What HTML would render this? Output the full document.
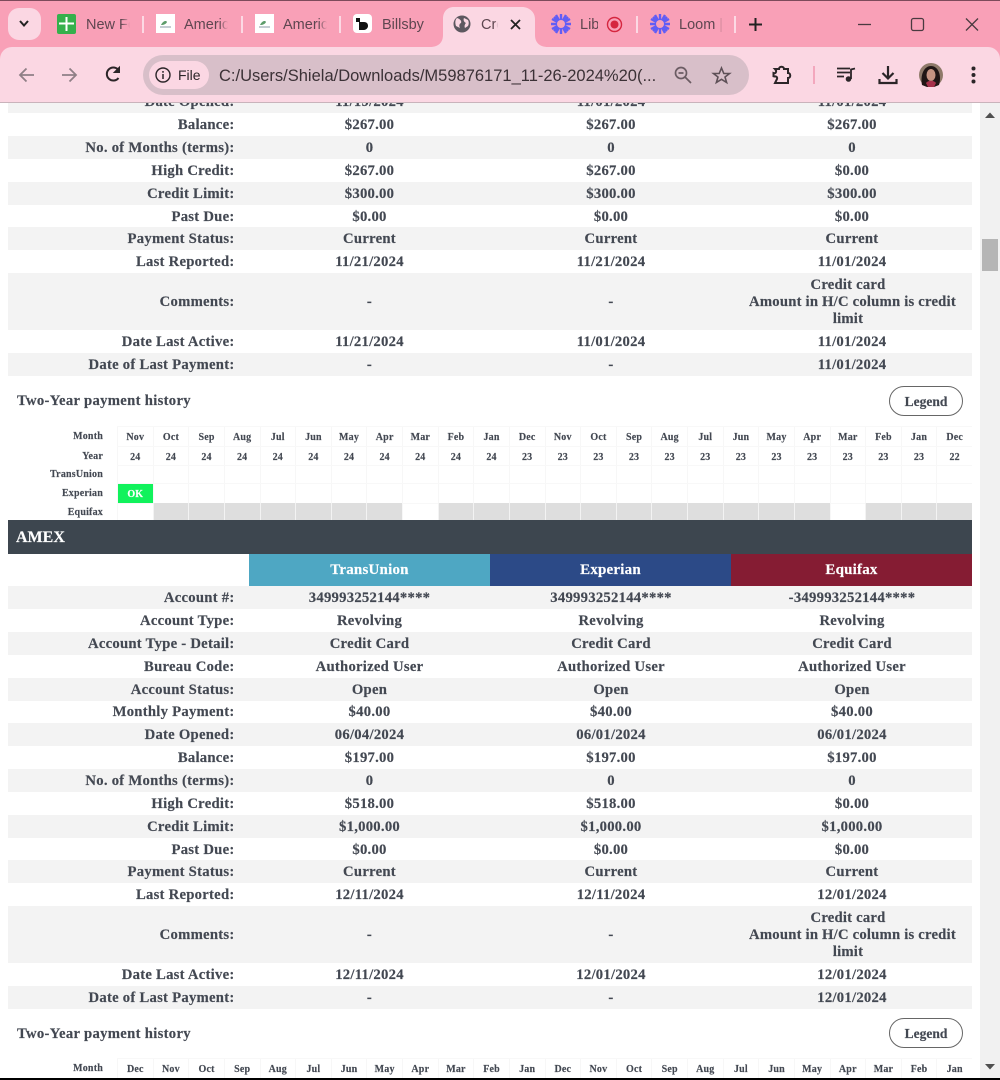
<!DOCTYPE html>
<html><head><meta charset="utf-8"><title>Credit Report</title>
<style>
html,body{margin:0;padding:0;width:1000px;height:1080px;overflow:hidden;background:#fff}
#pg{position:absolute;left:0;top:0;width:1000px;height:1078px;overflow:hidden;font-family:"Liberation Serif",serif;font-weight:bold;color:#434852;font-size:14.7px;filter:blur(.35px);-webkit-text-stroke:.15px}
.r{position:absolute;left:8px;width:964px;height:23px;line-height:23px;white-space:nowrap}
.g{background:#f3f3f3}
.r b{position:absolute;top:1px;right:737.5px;letter-spacing:.25px}
.r i{position:absolute;top:1px;font-style:normal;width:241px;text-align:center;letter-spacing:.25px}
.r i:nth-of-type(1){left:241px}.r i:nth-of-type(2){left:482.5px}.r i:nth-of-type(3){left:723.5px}
.c{height:57px;line-height:57px}
.r i.m{line-height:17px;padding-top:3px;left:731px;width:218px;letter-spacing:.2px;white-space:normal}
.r i.m span{position:relative;left:4.5px}
.h{position:absolute;left:17px;font-size:14.7px;letter-spacing:.3px;line-height:20px;margin-top:1px}
.lg{position:absolute;left:889px;width:72px;height:28px;border:1px solid #666;border-radius:15px;text-align:center;line-height:29px;font-size:13.5px;background:#fff}
.bar{position:absolute;left:8px;width:964px;height:34px;background:#3d464f;color:#fff;font-size:16px;line-height:35px;text-indent:8px}
.th{position:absolute;height:32px;line-height:33px;color:#fff;text-align:center;font-size:15px;letter-spacing:.2px}
.cal{position:absolute;left:8px;width:964px;font-size:10px;letter-spacing:.2px}
.cr{position:absolute;left:109px;width:855px;display:flex}
.cr span{flex:1 1 0;text-align:center;border-left:1px solid #f7f7f7;border-top:1px solid #f8f8f8;box-sizing:border-box;height:100%;padding-top:1px}
.cl{position:absolute;right:869px;text-align:right;margin-top:1px}
.e span.x{background:#dedede;border-left:1px solid #f3f3f3;border-top:0}
#sb{position:absolute;left:980px;top:103px;width:20px;height:975px;background:#f1f1f1}
#ch{position:absolute;left:0;top:0;width:1000px;height:103px;background:#f9a0b7;font-family:"Liberation Sans",sans-serif;filter:blur(.3px);overflow:hidden}
#tb{position:absolute;left:0;top:47px;width:1000px;height:56px;background:#fbd7e3;border-radius:12px 12px 0 0;border-bottom:1px solid #c9b3bb;box-sizing:border-box}
.t{position:absolute;top:15px;font-size:14.5px;line-height:20px;color:#5e4650;white-space:nowrap;overflow:hidden;-webkit-mask-image:linear-gradient(90deg,#000 80%,transparent)}
.s{position:absolute;top:16px;width:2px;height:17px;background:#fcd9e4}
svg{position:absolute;overflow:visible}
</style></head><body>
<div id="pg">
<div class="r g" style="top:90px"><b>Date Opened:</b><i>11/19/2024</i><i>11/01/2024</i><i>11/01/2024</i></div>
<div class="r" style="top:113px"><b>Balance:</b><i>$267.00</i><i>$267.00</i><i>$267.00</i></div>
<div class="r g" style="top:136px"><b>No. of Months (terms):</b><i>0</i><i>0</i><i>0</i></div>
<div class="r" style="top:159px"><b>High Credit:</b><i>$267.00</i><i>$267.00</i><i>$0.00</i></div>
<div class="r g" style="top:182px"><b>Credit Limit:</b><i>$300.00</i><i>$300.00</i><i>$300.00</i></div>
<div class="r" style="top:204.500px"><b>Past Due:</b><i>$0.00</i><i>$0.00</i><i>$0.00</i></div>
<div class="r g" style="top:227px"><b>Payment Status:</b><i>Current</i><i>Current</i><i>Current</i></div>
<div class="r" style="top:250px"><b>Last Reported:</b><i>11/21/2024</i><i>11/21/2024</i><i>11/01/2024</i></div>
<div class="r g c" style="top:273px"><b>Comments:</b><i>-</i><i>-</i><i class="m">Credit card<br><span>Amount in H/C column is credit</span><br>limit</i></div>
<div class="r" style="top:330px"><b>Date Last Active:</b><i>11/21/2024</i><i>11/01/2024</i><i>11/01/2024</i></div>
<div class="r g" style="top:353px"><b>Date of Last Payment:</b><i>-</i><i>-</i><i>11/01/2024</i></div>

<div class="h" style="top:390px">Two-Year payment history</div>
<div class="lg" style="top:386px">Legend</div>

<div class="cal" style="top:426px;height:94px">
<div class="cl" style="top:0;line-height:20px">Month</div>
<div class="cl" style="top:20px;line-height:19px">Year</div>
<div class="cl" style="top:39px;line-height:18px">TransUnion</div>
<div class="cl" style="top:57px;line-height:20px">Experian</div>
<div class="cl" style="top:77px;line-height:17px">Equifax</div>
<div class="cr" style="top:0;height:20px;line-height:20px"><span>Nov</span><span>Oct</span><span>Sep</span><span>Aug</span><span>Jul</span><span>Jun</span><span>May</span><span>Apr</span><span>Mar</span><span>Feb</span><span>Jan</span><span>Dec</span><span>Nov</span><span>Oct</span><span>Sep</span><span>Aug</span><span>Jul</span><span>Jun</span><span>May</span><span>Apr</span><span>Mar</span><span>Feb</span><span>Jan</span><span>Dec</span></div>
<div class="cr" style="top:20px;height:19px;line-height:19px"><span>24</span><span>24</span><span>24</span><span>24</span><span>24</span><span>24</span><span>24</span><span>24</span><span>24</span><span>24</span><span>24</span><span>23</span><span>23</span><span>23</span><span>23</span><span>23</span><span>23</span><span>23</span><span>23</span><span>23</span><span>23</span><span>23</span><span>23</span><span>22</span></div>
<div class="cr" style="top:39px;height:18px"><span></span><span></span><span></span><span></span><span></span><span></span><span></span><span></span><span></span><span></span><span></span><span></span><span></span><span></span><span></span><span></span><span></span><span></span><span></span><span></span><span></span><span></span><span></span><span></span></div>
<div class="cr" style="top:57px;height:20px;line-height:19px"><span style="background:#11f25c;color:#fff">OK</span><span></span><span></span><span></span><span></span><span></span><span></span><span></span><span></span><span></span><span></span><span></span><span></span><span></span><span></span><span></span><span></span><span></span><span></span><span></span><span></span><span></span><span></span><span></span></div>
<div class="cr e" style="top:77px;height:17px"><span></span><span class="x"></span><span class="x"></span><span class="x"></span><span class="x"></span><span class="x"></span><span class="x"></span><span class="x"></span><span></span><span class="x"></span><span class="x"></span><span class="x"></span><span class="x"></span><span class="x"></span><span class="x"></span><span class="x"></span><span class="x"></span><span class="x"></span><span class="x"></span><span class="x"></span><span></span><span class="x"></span><span class="x"></span><span class="x"></span></div>
</div>

<div class="bar" style="top:520px">AMEX</div>
<div class="th" style="top:554px;left:249px;width:241px;background:#4ea7c3">TransUnion</div>
<div class="th" style="top:554px;left:490px;width:241px;background:#2c4a87">Experian</div>
<div class="th" style="top:554px;left:731px;width:241px;background:#851c33">Equifax</div>

<div class="r g" style="top:586px"><b>Account #:</b><i>349993252144****</i><i>349993252144****</i><i>-349993252144****</i></div>
<div class="r" style="top:609px"><b>Account Type:</b><i>Revolving</i><i>Revolving</i><i>Revolving</i></div>
<div class="r g" style="top:632px"><b>Account Type - Detail:</b><i>Credit Card</i><i>Credit Card</i><i>Credit Card</i></div>
<div class="r" style="top:654.500px"><b>Bureau Code:</b><i>Authorized User</i><i>Authorized User</i><i>Authorized User</i></div>
<div class="r g" style="top:677.500px"><b>Account Status:</b><i>Open</i><i>Open</i><i>Open</i></div>
<div class="r" style="top:700px"><b>Monthly Payment:</b><i>$40.00</i><i>$40.00</i><i>$40.00</i></div>
<div class="r g" style="top:723px"><b>Date Opened:</b><i>06/04/2024</i><i>06/01/2024</i><i>06/01/2024</i></div>
<div class="r" style="top:746px"><b>Balance:</b><i>$197.00</i><i>$197.00</i><i>$197.00</i></div>
<div class="r g" style="top:769px"><b>No. of Months (terms):</b><i>0</i><i>0</i><i>0</i></div>
<div class="r" style="top:792px"><b>High Credit:</b><i>$518.00</i><i>$518.00</i><i>$0.00</i></div>
<div class="r g" style="top:814.500px"><b>Credit Limit:</b><i>$1,000.00</i><i>$1,000.00</i><i>$1,000.00</i></div>
<div class="r" style="top:837.500px"><b>Past Due:</b><i>$0.00</i><i>$0.00</i><i>$0.00</i></div>
<div class="r g" style="top:860px"><b>Payment Status:</b><i>Current</i><i>Current</i><i>Current</i></div>
<div class="r" style="top:883px"><b>Last Reported:</b><i>12/11/2024</i><i>12/11/2024</i><i>12/01/2024</i></div>
<div class="r g c" style="top:906px"><b>Comments:</b><i>-</i><i>-</i><i class="m">Credit card<br><span>Amount in H/C column is credit</span><br>limit</i></div>
<div class="r" style="top:963px"><b>Date Last Active:</b><i>12/11/2024</i><i>12/01/2024</i><i>12/01/2024</i></div>
<div class="r g" style="top:986px"><b>Date of Last Payment:</b><i>-</i><i>-</i><i>12/01/2024</i></div>

<div class="h" style="top:1023px">Two-Year payment history</div>
<div class="lg" style="top:1018px">Legend</div>
<div class="cal" style="top:1058px;height:20px">
<div class="cl" style="top:0;line-height:20px">Month</div>
<div class="cr" style="top:0;height:20px;line-height:20px"><span>Dec</span><span>Nov</span><span>Oct</span><span>Sep</span><span>Aug</span><span>Jul</span><span>Jun</span><span>May</span><span>Apr</span><span>Mar</span><span>Feb</span><span>Jan</span><span>Dec</span><span>Nov</span><span>Oct</span><span>Sep</span><span>Aug</span><span>Jul</span><span>Jun</span><span>May</span><span>Apr</span><span>Mar</span><span>Feb</span><span>Jan</span></div>
</div>

<div id="sb">
<div style="position:absolute;left:2px;top:136px;width:16px;height:32px;background:#b5b5b5"></div>
<svg style="left:0;top:0" width="20" height="975"><path d="M5 15L10 9.500L15 15Z" fill="#505050"/><path d="M5 961L15 961L10 966.500Z" fill="#505050"/></svg>
</div>
</div>
<div style="position:absolute;left:0;top:1078px;width:1000px;height:2px;background:#000"></div>

<div id="ch">
<div style="position:absolute;left:0;top:0;width:1000px;height:1px;background:#7d4a5b"></div>
<div id="tb"></div>
<!-- active tab -->
<svg style="left:430px;top:7px" width="118" height="42"><path d="M0 40C9 40 13 35 13 28V12C13 5 17 0 24 0H92C99 0 105 5 105 12V28C105 35 109 40 118 40V42H0Z" fill="#fbd7e3"/></svg>
<div style="position:absolute;left:8px;top:8px;width:33px;height:32px;border-radius:11px;background:#fbd7e3"></div>
<svg style="left:17px;top:18px" width="14" height="12"><path d="M3 3L7 7.500L11 3" fill="none" stroke="#222" stroke-width="2"/></svg>
<!-- sheets -->
<svg style="left:57px;top:14px" width="20" height="20"><rect width="19" height="20" rx="2" fill="#35b04c"/><path d="M2 9.500H17M9.500 3V17" stroke="#fff" stroke-width="2"/></svg>
<div class="t" style="left:86px;width:44px">New Form</div>
<div class="s" style="left:142px"></div>
<svg style="left:156px;top:14px" width="19" height="19"><rect width="19" height="19" fill="#fff"/><path d="M5 11C7 7 10 6 11 8C10 10 8 11 5 11Z" fill="#5d9c6a"/><path d="M4 13H15" stroke="#8a9aa5" stroke-width="1"/></svg>
<div class="t" style="left:184px;width:44px">America</div>
<div class="s" style="left:241px"></div>
<svg style="left:255px;top:14px" width="19" height="19"><rect width="19" height="19" fill="#fff"/><path d="M5 11C7 7 10 6 11 8C10 10 8 11 5 11Z" fill="#5d9c6a"/><path d="M4 13H15" stroke="#8a9aa5" stroke-width="1"/></svg>
<div class="t" style="left:283px;width:44px">America</div>
<div class="s" style="left:339px"></div>
<svg style="left:353px;top:14px" width="19" height="19"><rect width="19" height="19" rx="4" fill="#fff"/><rect x="3" y="4" width="4" height="4" fill="#111"/><path d="M6 8H11C14 8 15 10 15 12C15 14 13 16 11 16H6Z" fill="#111"/></svg>
<div class="t" style="left:382px;width:44px;-webkit-mask-image:none">Billsby</div>
<svg style="left:453px;top:15px" width="18" height="18"><circle cx="9" cy="9" r="8.500" fill="#5d5860"/><path d="M4 3C7 4 9 6 8 8C6 9 6 11 7 13L3 11C2 8 2 5 4 3ZM11 3L15 5C16 7 16 9 15 11L12 13C11 11 12 9 13 8C11 7 10 5 11 3Z" fill="#fbd7e3"/></svg>
<div class="t" style="left:481px;width:17px">Credit</div>
<svg style="left:510px;top:19px" width="11" height="11"><path d="M1 1L10 10M10 1L1 10" stroke="#222" stroke-width="1.800"/></svg>
<svg style="left:551px;top:14px" width="20" height="20"><g stroke="#625df5" stroke-width="2.400"><path d="M10 0V20M0 10H20M3 3L17 17M17 3L3 17M5 1L15 19M15 1L5 19M1 5L19 15M19 5L1 15"/></g><circle cx="10" cy="10" r="4" fill="#f9a0b7"/></svg>
<div class="t" style="left:580px;width:18px;-webkit-mask-image:none">Lib</div>
<svg style="left:606px;top:16px" width="17" height="17"><circle cx="8.500" cy="8.500" r="7" fill="none" stroke="#d5263f" stroke-width="1.400"/><circle cx="8.500" cy="8.500" r="4" fill="#d5263f"/></svg>
<div class="s" style="left:636px"></div>
<svg style="left:650px;top:14px" width="20" height="20"><g stroke="#625df5" stroke-width="2.400"><path d="M10 0V20M0 10H20M3 3L17 17M17 3L3 17M5 1L15 19M15 1L5 19M1 5L19 15M19 5L1 15"/></g><circle cx="10" cy="10" r="4" fill="#f9a0b7"/></svg>
<div class="t" style="left:679px;width:44px">Loom | Re</div>
<div class="s" style="left:734px"></div>
<svg style="left:749px;top:18px" width="13" height="13"><path d="M6.500 0V13M0 6.500H13" stroke="#222" stroke-width="2"/></svg>
<svg style="left:858px;top:18px" width="120" height="13"><path d="M0 6.500H13" stroke="#4a3a40" stroke-width="1.300"/><rect x="53.500" y="0.500" width="12" height="12" rx="2" fill="none" stroke="#4a3a40" stroke-width="1.300"/><path d="M108 0.500L120 12.500M120 0.500L108 12.500" stroke="#4a3a40" stroke-width="1.300"/></svg>
<!-- toolbar icons -->
<svg style="left:18px;top:66px" width="120" height="18"><path d="M16 9H2.500M8.500 2.500L2 9L8.500 15.500" fill="none" stroke="#8f7f86" stroke-width="1.800"/><path d="M44 9H58M51.500 2.500L58 9L51.500 15.500" fill="none" stroke="#8f7f86" stroke-width="1.800"/><path d="M100 3.500A6.500 6.500 0 1 0 100.500 12" fill="none" stroke="#2b2528" stroke-width="2"/><path d="M96 6.500H101.500V1Z" fill="#2b2528" stroke="#2b2528"/></svg>
<div style="position:absolute;left:143px;top:55px;width:606px;height:40px;border-radius:20px;background:#d8bfc9"></div>
<div style="position:absolute;left:149px;top:61px;width:60px;height:28px;border-radius:14px;background:#fbd7e3"></div>
<svg style="left:155px;top:67px" width="16" height="16"><circle cx="8" cy="8" r="7" fill="none" stroke="#2b2528" stroke-width="1.400"/><path d="M8 7V12M8 4V5.800" stroke="#2b2528" stroke-width="1.500"/></svg>
<div style="position:absolute;left:178px;top:66px;font-size:14px;line-height:18px;color:#2b2528">File</div>
<div style="position:absolute;left:219px;top:66px;font-size:16.500px;line-height:21px;color:#3b3136;white-space:nowrap">C:/Users/Shiela/Downloads/M59876171_11-26-2024%20(...</div>
<svg style="left:674px;top:66px" width="60" height="19"><circle cx="7" cy="7" r="5.500" fill="none" stroke="#6b5c63" stroke-width="1.700"/><path d="M4.500 7H9.500M11 11L17 17" stroke="#6b5c63" stroke-width="1.700"/><path d="M47.500 2L49.800 7.500H55.500L51 11L52.600 16.500L47.500 13.300L42.400 16.500L44 11L39.500 7.500H45.200Z" fill="none" stroke="#5e5057" stroke-width="1.600"/></svg>
<svg style="left:772px;top:65px" width="20" height="20"><path d="M3 4H7C7 1 12 1 12 4H16V8C19 8 19 13 16 13V18H3L5 14C6 11 2 11 1.500 12V8C4 9 5 6 3 4Z" fill="none" stroke="#2b2528" stroke-width="2"/></svg>
<div style="position:absolute;left:813px;top:66px;width:2px;height:18px;background:#f3a7bd"></div>
<svg style="left:836px;top:67px" width="20" height="16"><path d="M1 1.500H14M1 5.500H14M1 9.500H8" stroke="#2b2528" stroke-width="1.800"/><circle cx="12.500" cy="12" r="2.800" fill="#2b2528"/><path d="M15 12V2.500L19 1.500" fill="none" stroke="#2b2528" stroke-width="1.800"/></svg>
<svg style="left:878px;top:65px" width="20" height="20"><path d="M10 1V13M4.500 8L10 13.500L15.500 8M1.500 14V18H18.500V14" fill="none" stroke="#2b2528" stroke-width="2.200"/></svg>
<svg style="left:919px;top:63px" width="24" height="24"><circle cx="12" cy="12" r="12" fill="#8f7a6a"/><path d="M3 22C1 12 5 3 12 3C19 3 23 12 20 22L15 24H8Z" fill="#201615"/><ellipse cx="12" cy="12" rx="4.500" ry="6" fill="#c59482"/><path d="M7 20C9 17 15 17 17 20L15 24H9Z" fill="#a5304a"/></svg>
<svg style="left:971px;top:66px" width="5" height="18"><circle cx="2.500" cy="2.500" r="2" fill="#2b2528"/><circle cx="2.500" cy="9" r="2" fill="#2b2528"/><circle cx="2.500" cy="15.500" r="2" fill="#2b2528"/></svg>
</div>
</body></html>
